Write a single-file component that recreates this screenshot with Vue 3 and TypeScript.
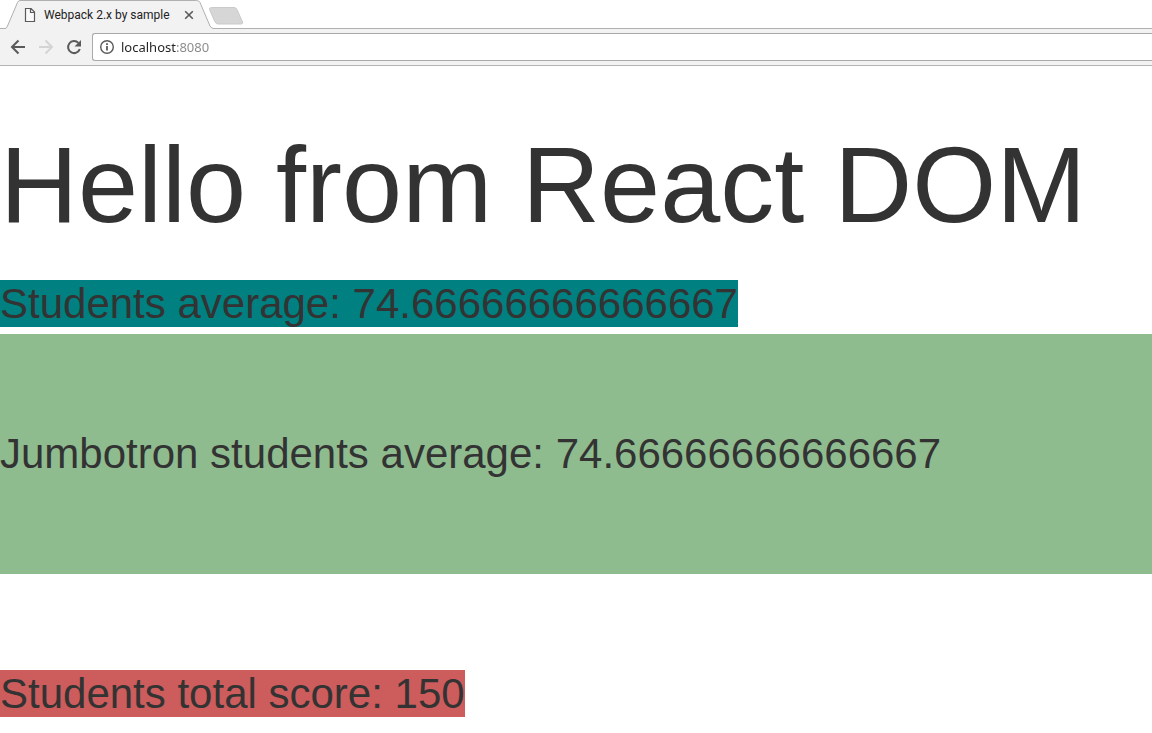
<script setup lang="ts">
import { ref } from 'vue'

const scores: number[] = [70, 80, 74]
const total = scores[0] + scores[1]
const average = scores.reduce((sum, score) => sum + score, 0) / scores.length
const averageText = average.toPrecision(16)
const address = ref('localhost:8080')
</script>

<template>
  <div class="browser">
    <header>
      <div class="tab-strip">
        <div class="tab">
          <svg class="tab-shape" width="212" height="29" viewBox="0 0 212 29" aria-hidden="true">
            <path d="M0 28.500H3Q4.500 28.500 5.500 26L15.500 2.500Q16.500 .5 18 .5H194.500Q197 .5 198 2.500L208 26Q209 28.500 212 28.500V29H0Z" fill="#f2f2f2" />
            <path d="M0 28.500H3Q4.500 28.500 5.500 26L15.500 2.500Q16.500 .5 18 .5H194.500Q197 .5 198 2.500L208 26Q209 28.500 212 28.500" fill="none" stroke="#b0b0b0" />
          </svg>
          <svg class="page-icon" width="12" height="14" viewBox="0 0 12 14" aria-hidden="true">
            <path d="M1.500 .5H7L10.500 4V13.500H1.500ZM6.500 .5V4.500H10.500" fill="#fafafa" stroke="#5a5a5a" stroke-width="1.200" />
          </svg>
          <span class="tab-title">Webpack 2.x by sample</span>
          <button class="close" type="button" aria-label="Close tab">
            <svg width="10" height="10" viewBox="0 0 10 10"><path d="M1.200 1.200L8.800 8.800M8.800 1.200L1.200 8.800" stroke="#5a5a5a" stroke-width="1.600" /></svg>
          </button>
        </div>
        <button class="new-tab" type="button" aria-label="New tab">
          <svg width="36" height="19" viewBox="0 0 36 19">
            <path d="M3.500 .5H26Q28 .5 29 2.500L34.500 15Q35 17 33 17H10Q8 17 7 15L1.500 2.500Q1 .5 3.500 .5Z" fill="#d6d6d6" stroke="#cacaca" />
          </svg>
        </button>
      </div>
      <div class="toolbar">
        <nav class="controls" aria-label="Navigation">
          <button type="button" aria-label="Back">
            <svg width="16" height="16" viewBox="0 0 16 16"><path d="M15 8H2.500M8.500 1.500L2 8L8.500 14.500" fill="none" stroke="#5a5a5a" stroke-width="2" /></svg>
          </button>
          <button type="button" aria-label="Forward" disabled>
            <svg width="16" height="16" viewBox="0 0 16 16"><path d="M1 8H13.500M7.500 1.500L14 8L7.500 14.500" fill="none" stroke="#d4d4d4" stroke-width="2" /></svg>
          </button>
          <button type="button" aria-label="Reload">
            <svg width="16" height="16" viewBox="0 0 16 16"><path d="M13.800 10A6 6 0 1 1 12.400 3.900" fill="none" stroke="#5a5a5a" stroke-width="2" /><path d="M15 1V7.500H8.500Z" fill="#5a5a5a" /></svg>
          </button>
        </nav>
        <label class="omnibox">
          <svg width="16" height="16" viewBox="0 0 16 16" aria-hidden="true">
            <circle cx="8" cy="8" r="6.300" fill="none" stroke="#5a5a5a" stroke-width="1.400" />
            <path d="M8 7V11.500M8 4.300V5.900" stroke="#5a5a5a" stroke-width="1.800" />
          </svg>
          <input v-model="address" class="address" type="text" aria-label="Address" spellcheck="false" />
        </label>
      </div>
    </header>
    <main>
      <h1>Hello from React DOM</h1>
      <div><span class="average">Students average: {{ averageText }}</span></div>
      <div class="jumbotron">Jumbotron students average: {{ averageText }}</div>
      <div><span class="total">Students total score: {{ total }}</span></div>
    </main>
  </div>
</template>

<style>
body {
  margin: 0;
  background: #fff;
}
</style>

<style scoped>
.browser {
  color: #333;
  font-family: "Liberation Sans", Arial, sans-serif;
}
button {
  display: flex;
  padding: 0;
  border: 0;
  background: none;
}
.tab-strip {
  display: flex;
  height: 29px;
  box-sizing: border-box;
  padding-left: 2px;
  background: linear-gradient(#b0b0b0, #b0b0b0) bottom / 100% 1px no-repeat #fff;
}
.tab {
  position: relative;
  display: flex;
  align-items: center;
  width: 212px;
  height: 29px;
  box-sizing: border-box;
  padding: 1px 20px 0 22px;
}
.tab-shape {
  position: absolute;
  inset: 0;
}
.page-icon,
.tab-title,
.close {
  position: relative;
}
.tab-title {
  flex: 1;
  margin-left: 8px;
  color: #222;
  font: 12px/16px Roboto, "Open Sans", sans-serif;
  white-space: nowrap;
}
.new-tab {
  align-self: flex-start;
  margin: 7px 0 0 -6px;
}
.toolbar {
  display: flex;
  align-items: center;
  height: 36px;
  padding-left: 10px;
  border-bottom: 1px solid #b4b4b4;
  background: #f2f2f2;
}
.controls {
  display: flex;
  gap: 12px;
}
.omnibox {
  display: flex;
  flex: 1;
  align-items: center;
  gap: 6px;
  height: 26px;
  margin-left: 10px;
  padding-left: 6px;
  border: 1px solid #a9a9a9;
  border-right: 0;
  border-radius: 3px 0 0 3px;
  background: #fff;
}
.address {
  flex: 1;
  min-width: 0;
  padding: 0;
  border: 0;
  outline: 0;
  background: linear-gradient(90deg, #222 55px, #888 55px) text;
  color: transparent;
  font: 13px/20px "Noto Sans", "Open Sans", sans-serif;
}
main {
  font-size: 42px;
  line-height: 60px;
}
h1 {
  margin: 60px 0 30px;
  font-size: 108px;
  font-weight: 400;
  line-height: 118px;
}
.average {
  background: teal;
}
.jumbotron {
  margin-bottom: 90px;
  padding: 90px 0;
  background: #8fbc8f;
}
.total {
  background: #cd5c5c;
}
</style>
